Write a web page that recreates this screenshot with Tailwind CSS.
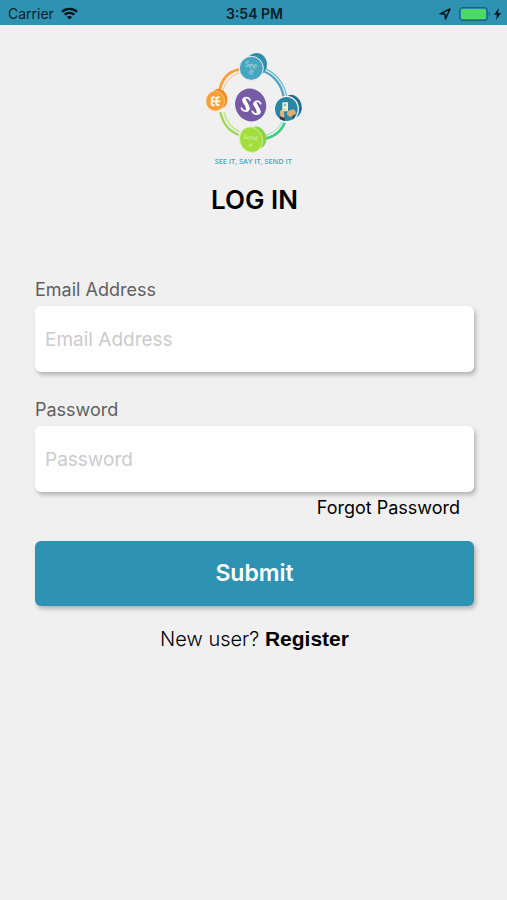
<!DOCTYPE html>
<html lang="en">
<head>
    <meta charset="UTF-8" />
    <meta name="viewport" content="width=device-width, initial-scale=1.0">
    <title>Log In</title>
    <script src="https://cdn.jsdelivr.net/npm/@tailwindcss/browser@4"></script>
</head>
<body class="min-h-screen bg-[#f0f0f0] font-['Inter','Liberation_Sans',sans-serif] text-black">

    <!-- Status bar -->
    <header class="grid h-[25px] grid-cols-3 items-center bg-[#2e93b3] pt-[2px] pr-[6px] pl-2 text-[#06202a]">
        <div class="flex items-center gap-[7px]">
            <span class="text-sm leading-5">Carrier</span>
            <svg class="h-[13px] w-[17px]" viewBox="0 0 17 13" fill="none" stroke="#04141b" stroke-width="2.3">
                <path d="M1 4.9C5.2.9 11.8.9 16 4.9" />
                <path d="M3.7 7.7c2.7-2.5 6.9-2.5 9.6 0" />
                <path d="M5.9 9.9c1.5-1.3 3.7-1.3 5.2 0L8.5 12.5z" fill="#04141b" stroke="none" />
            </svg>
        </div>
        <span class="text-center text-sm leading-5 font-semibold">3:54 PM</span>
        <div class="flex items-center justify-end gap-2">
            <svg class="h-3 w-3" viewBox="0 0 12 12" fill="none" stroke="#04141b" stroke-width="1.4" stroke-linejoin="round">
                <path d="M1 5.8L11 1 6.5 11 6 6z" />
            </svg>
            <div class="flex items-center">
                <svg class="h-[14px] w-8" viewBox="0 0 32 14">
                    <rect x=".7" y=".7" width="27.6" height="12.6" rx="3" fill="none" stroke="#1c6382" stroke-width="1.2" />
                    <rect x="2" y="2" width="25" height="10" rx="1.5" fill="#4cd964" />
                    <path d="M29.8 4.8c1.7.7 1.7 3.7 0 4.4z" fill="#1c6382" />
                </svg>
                <svg class="ml-[3px] h-3 w-[7px]" viewBox="0 0 7 12" fill="#04141b">
                    <path d="M5 0L0 6.7h3L2 12l5-7H4z" />
                </svg>
            </div>
        </div>
    </header>

    <main class="pt-5 pr-[33px] pb-6 pl-[35px]">
        <svg class="mx-auto h-[125px] w-[120px]" viewBox="0 0 360 375" role="img" aria-label="See it, say it, send it">
            <!-- ring -->
            <g fill="none">
                <path d="M73 140C79 106 99 80 132 73" stroke="#f8a13c" stroke-width="8" />
                <path d="M82 142C88 116 105 93 132 83" stroke="#fbc07c" stroke-width="3" />
                <path d="M203 78C236 89 260 119 266 156" stroke="#4ba6c2" stroke-width="7" />
                <path d="M208 70C244 84 268 116 275 154" stroke="#6db9cf" stroke-width="4" />
                <path d="M76 202C83 234 103 259 131 270" stroke="#9ed651" stroke-width="7" />
                <path d="M87 202C94 230 110 251 136 261" stroke="#b8e37c" stroke-width="4" />
                <path d="M203 282C235 277 258 260 269 233" stroke="#3fcb86" stroke-width="8" />
                <path d="M205 273C232 267 251 252 260 230" stroke="#8bdfb4" stroke-width="3" />
            </g>
            <!-- see it -->
            <ellipse cx="184" cy="58" rx="32" ry="34" fill="#2f8ead" />
            <ellipse cx="169" cy="70" rx="36" ry="36" fill="#46a6c1" stroke="#f0f0f0" stroke-width="3" />
            <g font-family="Lato, sans-serif" font-size="23" text-anchor="middle" fill="#b5dfe8">
                <text transform="rotate(12 167 66)" x="167" y="68">See</text>
                <text transform="rotate(12 167 84)" x="168" y="88">it</text>
            </g>
            <!-- say it -->
            <ellipse cx="73" cy="161" rx="24" ry="30" transform="rotate(-15 73 161)" fill="#f18d24" />
            <ellipse cx="61" cy="168" rx="28" ry="30" fill="#fb9f32" stroke="#fbd3a2" stroke-width="2" />
            <g fill="none" stroke="#fff4e4" stroke-width="6" stroke-linecap="round">
                <path d="M58 157C48 155 48 168 55 169C46 171 49 183 57 181M53 169H60" />
                <path d="M72 157C62 155 62 168 69 169C61 171 63 183 71 180M67 169H73" />
            </g>
            <!-- centre badge -->
            <ellipse cx="167" cy="180" rx="46" ry="50" transform="rotate(-25 167 180)" fill="#765aa5" />
            <g fill="none" stroke="#fff" stroke-linecap="round">
                <path d="M165 166C161 154 145 156 144 166C144 177 162 180 162 191C160 202 143 200 139 189" stroke-width="5" />
                <path d="M148 166C151 177 159 181 158 191" stroke-width="11" />
                <path d="M197 176C192 165 178 167 177 177C177 187 196 191 195 201C192 211 176 209 172 199" stroke-width="5" />
                <path d="M181 177C184 187 192 191 190 201" stroke-width="11" />
            </g>
            <!-- phone -->
            <ellipse cx="292" cy="184" rx="28" ry="35" transform="rotate(-15 292 184)" fill="#236f8f" />
            <ellipse cx="274" cy="192" rx="36" ry="38" fill="#2b86a5" stroke="#eef5f7" stroke-width="4" />
            <path d="M255 198l8-4 5 13-1 17-10-3z" fill="#eab676" />
            <path d="M277 201c8-9 18-10 24-4l2 10-9 10-10-2-8-6z" fill="#e3ad72" />
            <path d="M255 214l14 5v9l-15-6z" fill="#3b3340" />
            <path d="M290 213l13-7-4 13-7 5z" fill="#1f5f80" />
            <rect x="262" y="172" width="17" height="27" rx="2" fill="#f5f3dc" />
            <rect x="266" y="176" width="8" height="8" fill="#8cc8a0" />
            <rect x="265" y="191" width="10" height="5" fill="#ead160" />
            <!-- send it -->
            <ellipse cx="185" cy="278" rx="29" ry="34" transform="rotate(-20 185 278)" fill="#8ed343" />
            <ellipse cx="168" cy="284" rx="34" ry="39" transform="rotate(-20 168 284)" fill="#a2df3d" stroke="#e4f4c8" stroke-width="2" />
            <g font-family="Lato, sans-serif" font-size="19" text-anchor="middle" fill="#d9f4a9">
                <text transform="rotate(8 166 280)" x="166" y="284">Send</text>
                <text transform="rotate(8 166 300)" x="167" y="306">it</text>
            </g>
            <text x="175" y="357" text-anchor="middle" font-family="Open Sans, sans-serif" font-size="22" font-weight="600" fill="#4ba3bf">SEE IT, SAY IT, SEND IT</text>
        </svg>

        <h1 class="mt-3 text-center text-[26px] leading-9 font-semibold">LOG IN</h1>

        <form class="mt-[59px]">
            <label for="email" class="block text-lg leading-[26px] text-[#606060]">Email Address</label>
            <input id="email" type="email" placeholder="Email Address" class="mt-[3px] block h-[66px] w-full rounded-md bg-white px-[10px] text-[19px] shadow-[2px_3px_4px_rgba(0,0,0,0.25)] outline-none placeholder:text-[#cbcbcd]">

            <label for="password" class="mt-[25px] block text-lg leading-[26px] text-[#606060]">Password</label>
            <input id="password" type="password" placeholder="Password" class="mt-[3px] block h-[66px] w-full rounded-md bg-white px-[10px] text-[19px] shadow-[2px_3px_4px_rgba(0,0,0,0.25)] outline-none placeholder:text-[#cbcbcd]">

            <div class="mt-[3px] pr-[14px] text-right">
                <a href="#" class="text-lg leading-[26px]">Forgot Password</a>
            </div>

            <button type="submit" class="mt-5 block h-[65px] w-full rounded-md bg-[#2e93b3] text-[23px] font-semibold text-white shadow-[2px_3px_4px_rgba(0,0,0,0.25)]">Submit</button>
        </form>

        <p class="mt-5 text-center text-xl leading-[26px]">
            <span class="font-light">New user?</span>
            <a href="#" class="font-['Liberation_Sans',sans-serif] text-[21px] font-bold">Register</a>
        </p>
    </main>

</body>
</html>
